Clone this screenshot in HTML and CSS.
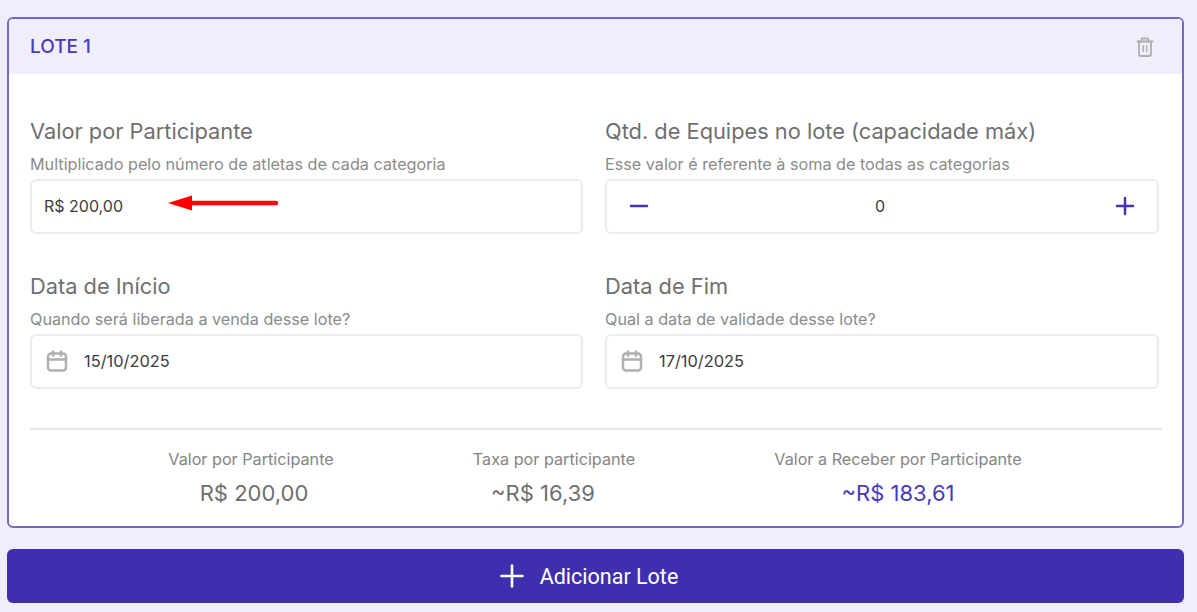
FILE: index.html
```html
<!DOCTYPE html>
<html lang="pt-BR">
<head>
<meta charset="utf-8">
<title>Lote</title>
<link rel="stylesheet" href="styles.css">
</head>
<body>
<section class="card">
  <header class="card-head">
    <h2 class="lot-title">LOTE 1</h2>
    <svg class="trash" width="24" height="24" viewBox="0 0 24 24" fill="none" stroke="#adadad" stroke-width="1.800" stroke-linejoin="round" stroke-linecap="round"><path d="M4.500 6.500h15"/><path d="M8.500 6.500V5a1.500 1.500 0 0 1 1.500-1.500h4A1.500 1.500 0 0 1 15.500 5v1.500"/><path d="M6 6.500V19a2 2 0 0 0 2 2h8a2 2 0 0 0 2-2V6.500"/><path d="M10.300 11v5.500M13.700 11v5.500" stroke-width="1.500"/></svg>
  </header>
  <div class="card-body">
    <div class="fields">
      <div class="field">
        <h3 class="field-title">Valor por Participante</h3>
        <p class="field-hint">Multiplicado pelo número de atletas de cada categoria</p>
        <div class="box box-money">
          <span class="value">R$ 200,00</span>
          <svg class="arrow" width="112" height="16" viewBox="0 0 112 16"><path d="M1 8 L25 .5 V5.800 H109 a2.200 2.200 0 0 1 0 4.400 H25 V15.500 Z" fill="#fe0000"/></svg>
        </div>
      </div>
      <div class="field">
        <h3 class="field-title">Qtd. de Equipes no lote (capacidade máx)</h3>
        <p class="field-hint">Esse valor é referente à soma de todas as categorias</p>
        <div class="box box-stepper">
          <svg width="24" height="24" viewBox="0 0 24 24" fill="none" stroke="#4433b6" stroke-width="2.500" stroke-linecap="round"><path d="M4 12h16"/></svg>
          <span class="value step-value">0</span>
          <svg width="24" height="24" viewBox="0 0 24 24" fill="none" stroke="#4433b6" stroke-width="2.500" stroke-linecap="round"><path d="M4 12h16M12 4v16"/></svg>
        </div>
      </div>
      <div class="field">
        <h3 class="field-title">Data de Início</h3>
        <p class="field-hint">Quando será liberada a venda desse lote?</p>
        <div class="box box-date">
          <svg width="24" height="24" viewBox="0 0 24 24" fill="none" stroke="#b0b0b0" stroke-width="2.500" stroke-linecap="round" stroke-linejoin="round"><rect x="3" y="4.500" width="18" height="17" rx="3"/><path d="M3 10.500h18M8 2.500v4M16 2.500v4"/></svg>
          <span class="value">15/10/2025</span>
        </div>
      </div>
      <div class="field">
        <h3 class="field-title">Data de Fim</h3>
        <p class="field-hint">Qual a data de validade desse lote?</p>
        <div class="box box-date">
          <svg width="24" height="24" viewBox="0 0 24 24" fill="none" stroke="#b0b0b0" stroke-width="2.500" stroke-linecap="round" stroke-linejoin="round"><rect x="3" y="4.500" width="18" height="17" rx="3"/><path d="M3 10.500h18M8 2.500v4M16 2.500v4"/></svg>
          <span class="value">17/10/2025</span>
        </div>
      </div>
    </div>
    <div class="summary">
      <div class="stat stat-a">
        <span class="stat-label">Valor por Participante</span>
        <strong class="stat-value">R$ 200,00</strong>
      </div>
      <div class="stat stat-b">
        <span class="stat-label">Taxa por participante</span>
        <strong class="stat-value">~R$ 16,39</strong>
      </div>
      <div class="stat stat-c">
        <span class="stat-label">Valor a Receber por Participante</span>
        <strong class="stat-value stat-accent">~R$ 183,61</strong>
      </div>
    </div>
  </div>
</section>
<button class="add-btn" type="button">
  <svg width="32" height="32" viewBox="0 0 32 32" fill="none" stroke="#ffffff" stroke-width="2.600" stroke-linecap="round"><path d="M5.500 16h21M16 5.500v21"/></svg>
  <span>Adicionar Lote</span>
</button>
</body>
</html>
```

FILE: styles.css
```css
* { box-sizing: border-box; }
html, body { height: 612px; overflow: hidden; }
body {
  margin: 0;
  padding: 17px 13px 0 7px;
  background: #f0eefa;
  font-family: Inter, "Liberation Sans", sans-serif;
}
.card {
  height: 511px;
  border: 2px solid #7668c9;
  border-radius: 6px;
  background: #ffffff;
  overflow: hidden;
}
.card-head {
  height: 55px;
  padding: 0 25px 0 21px;
  background: #f0eefa;
  display: flex;
  align-items: center;
  justify-content: space-between;
}
.lot-title {
  margin: 0;
  font-size: 19px;
  font-weight: 500;
  color: #4a3abb;
}
.card-body { padding: 44px 21px 0; }
.fields {
  display: grid;
  grid-template-columns: 553px 554px;
  column-gap: 22px;
  row-gap: 39px;
}
.field-title {
  margin: 0;
  font-size: 21.800px;
  line-height: 26px;
  font-weight: 400;
  color: #6f6f6f;
}
.field-hint {
  margin: 10px 0 5px;
  font-size: 16.200px;
  line-height: 20px;
  color: #8b8b8b;
}
.box {
  position: relative;
  height: 55px;
  border: 2px solid #ececec;
  border-radius: 6px;
  display: flex;
  align-items: center;
  font-size: 16px;
  color: #3c3c3c;
}
.box-money { padding: 0 0 2px 12px; }
.arrow { position: absolute; left: 135px; top: 14px; }
.box-stepper { justify-content: space-between; padding: 0 20px 2px; }
.step-value { margin-right: 4px; }
.box-date { gap: 15px; padding: 0 0 1px 13px; font-size: 16.400px; }
.summary {
  margin: 39px 0 0;
  width: 1132px;
  border-top: 2px solid #e6e6e6;
  padding-top: 19px;
  display: flex;
}
.stat { display: flex; flex-direction: column; align-items: center; flex: none; }
.stat-a { width: 304px; margin-left: 69px; }
.stat-b { width: 304px; margin-left: -1px; }
.stat-c { width: 304px; margin-left: 40px; }
.stat-label { font-size: 16.200px; line-height: 20px; color: #858585; }
.stat-value {
  margin-top: 11px;
  font-size: 22px;
  line-height: 26px;
  font-weight: 400;
  color: #6f6f6f;
}
.stat-a .stat-value { margin-left: 6px; }
.stat-b .stat-value { margin-right: 22px; }
.stat-accent { color: #4a3abb; }
.add-btn {
  margin-top: 21px;
  width: 1177px;
  height: 54px;
  border: 0;
  border-radius: 6px;
  background: #3f2fae;
  color: #ffffff;
  font-family: Roboto, "Liberation Sans", sans-serif;
  font-size: 21.500px;
  display: flex;
  align-items: center;
  justify-content: center;
  gap: 12px;
  padding-right: 23px;
}
```
